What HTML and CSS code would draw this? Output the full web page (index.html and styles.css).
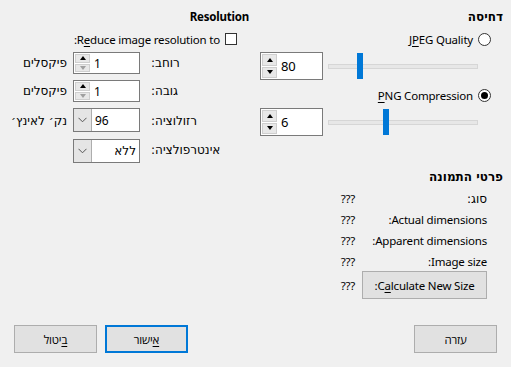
FILE: index.html
```html
<!DOCTYPE html>
<html lang="he" dir="rtl">
<head>
<meta charset="utf-8">
<link rel="stylesheet" href="styles.css">
</head>
<body>
<div class="dialog">
  <div class="top">
    <section class="col-compress">
      <h2 class="heading he">דחיסה</h2>
      <div class="opt">
        <span class="radio"></span>
        <span dir="ltr">J<u>P</u>EG Quality</span>
      </div>
      <div class="slide-row">
        <div class="slider"><div class="track"></div><div class="thumb" style="left:29px"></div></div>
        <div class="spin big">
          <div class="spin-btns"><span class="sbtn"><i class="up"></i></span><span class="sbtn"><i class="down"></i></span></div>
          <span class="val">80</span>
        </div>
      </div>
      <div class="opt opt2">
        <span class="radio on"></span>
        <span dir="ltr"><u>P</u>NG Compression</span>
      </div>
      <div class="slide-row">
        <div class="slider"><div class="track"></div><div class="thumb" style="left:55px"></div></div>
        <div class="spin big">
          <div class="spin-btns"><span class="sbtn"><i class="up"></i></span><span class="sbtn"><i class="down"></i></span></div>
          <span class="val">6</span>
        </div>
      </div>

      <h2 class="heading details-head he">פרטי התמונה</h2>
      <div class="details">
        <span class="dl he">סוג:</span><span class="dv">???</span>
        <span class="dl">Actual dimensions:</span><span class="dv">???</span>
        <span class="dl">Apparent dimensions:</span><span class="dv">???</span>
        <span class="dl">Image size:</span><span class="dv">???</span>
        <button class="btn calc">C<u>a</u>lculate New Size:</button><span class="dv">???</span>
      </div>
    </section>

    <section class="col-res">
      <h2 class="heading">Resolution</h2>
      <div class="opt">
        <span class="check"></span>
        <span>R<u>e</u>duce image resolution to:</span>
      </div>
      <div class="res-grid">
        <span class="lbl he">רוחב:</span>
        <div class="spin small">
          <div class="spin-btns"><span class="sbtn"><i class="up"></i></span><span class="sbtn"><i class="down dis"></i></span></div>
          <span class="val">1</span>
        </div>
        <span class="unit he">פיקסלים</span>

        <span class="lbl he">גובה:</span>
        <div class="spin small">
          <div class="spin-btns"><span class="sbtn"><i class="up"></i></span><span class="sbtn"><i class="down dis"></i></span></div>
          <span class="val">1</span>
        </div>
        <span class="unit he">פיקסלים</span>

        <span class="lbl he">רזולוציה:</span>
        <div class="combo">
          <span class="val num">96</span>
          <span class="drop"><svg width="9" height="6" viewBox="0 0 9 6"><path d="M0.5 0.8 L4.5 4.8 L8.5 0.8" fill="none" stroke="#555" stroke-width="1"/></svg></span>
        </div>
        <span class="unit he">נק׳ לאינץ׳</span>

        <span class="lbl he">אינטרפולציה:</span>
        <div class="combo">
          <span class="val he">ללא</span>
          <span class="drop"><svg width="9" height="6" viewBox="0 0 9 6"><path d="M0.5 0.8 L4.5 4.8 L8.5 0.8" fill="none" stroke="#555" stroke-width="1"/></svg></span>
        </div>
        <span class="unit"></span>
      </div>
    </section>
  </div>

  <div class="footer">
    <button class="btn fbtn he">עזרה</button>
    <div class="fgroup">
      <button class="btn fbtn default he"><u>א</u>ישור</button>
      <button class="btn fbtn he"><u>ב</u>יטול</button>
    </div>
  </div>
</div>
</body>
</html>
```

FILE: styles.css
```css
* { box-sizing: border-box; margin: 0; padding: 0; }
html, body { width: 511px; height: 367px; overflow: hidden; }
body {
  background: #f0f0f0;
  font-family: "Segoe UI", "Noto Sans", "Open Sans", "DejaVu Sans", sans-serif;
  font-size: 11.5px;
  letter-spacing: -0.2px;
  color: #000;
}
.he {
  font-family: "DejaVu Sans", sans-serif;
  font-size: 12px;
  letter-spacing: 0;
}
u { text-decoration: underline; text-underline-offset: 2px; }

.dialog {
  height: 367px;
  display: flex;
  flex-direction: column;
  padding: 9px 8px 14px;
}
.top { display: flex; gap: 6px; }
.col-compress { width: 248px; }
.col-res { width: 241px; }

.heading {
  font-size: 11.5px;
  font-weight: bold;
  line-height: 16px;
}
.heading.he { font-size: 12px; }

.opt {
  display: flex;
  align-items: center;
  gap: 5px;
  height: 16px;
  margin-top: 6px;
  padding-right: 12px;
}
.opt2 { margin-top: 7px; }

.radio {
  width: 13px; height: 13px;
  border: 1px solid #333;
  border-radius: 50%;
  background: #fff;
  display: flex; align-items: center; justify-content: center;
  flex: none;
}
.radio.on::after {
  content: "";
  width: 7px; height: 7px;
  border-radius: 50%;
  background: #000;
}
.check {
  width: 12px; height: 12px;
  border: 1px solid #333;
  background: #fff;
  flex: none;
}

.slide-row {
  display: flex;
  align-items: center;
  gap: 5px;
  height: 28px;
  margin-top: 5px;
  padding-right: 25px;
}
.slider {
  position: relative;
  width: 150px;
  height: 28px;
  display: flex;
  align-items: center;
}
.track {
  width: 100%;
  height: 5px;
  background: #e7e7e7;
  border: 1px solid #d6d6d6;
}
.thumb {
  position: absolute;
  top: 1px;
  width: 6px;
  height: 26px;
  background: #0078d7;
}

.spin {
  direction: ltr;
  display: flex;
  align-items: stretch;
  border: 1px solid #7a7a7a;
  background: #fff;
}
.spin.big { width: 63px; height: 28px; }
.spin.small { width: 67px; height: 22px; }
.spin-btns {
  display: flex;
  flex-direction: column;
  gap: 1px;
  padding: 1px 0 1px 1px;
  width: 16px;
}
.sbtn {
  flex: 1;
  background: #e8e8e8;
  border: 1px solid #cfcfcf;
  display: flex; align-items: center; justify-content: center;
}
.up, .down { width: 0; height: 0; border-left: 3.5px solid transparent; border-right: 3.5px solid transparent; }
.up { border-bottom: 4px solid #000; }
.down { border-top: 4px solid #000; }
.down.dis { border-top-color: #a0a0a0; }
.spin .val {
  display: flex;
  align-items: center;
  padding-left: 4px;
  font-size: 12px;
}
.spin.big .val { font-size: 13px; }

.res-grid {
  display: grid;
  grid-template-columns: 97px 67px 1fr;
  grid-template-rows: 22px 22px 25px 22px;
  row-gap: 6px;
  margin-top: 5px;
  padding-right: 12px;
  align-items: center;
}
.lbl { text-align: left; padding-left: 11px; }
.unit { padding-right: 6px; }

.combo {
  direction: ltr;
  display: flex;
  flex-direction: row-reverse;
  height: 24px;
  border: 1px solid #7a7a7a;
  background: #fff;
  align-self: start;
}
.combo .drop {
  width: 18px;
  background: #e5e5e5;
  border-right: 1px solid #adadad;
  display: flex; align-items: center; justify-content: center;
  order: 2;
}
.combo .val {
  flex: 1;
  display: flex;
  align-items: center;
  justify-content: flex-start;
  padding-right: 3px;
  direction: rtl;
  font-size: 12px;
}
.combo .val.num { direction: ltr; padding-left: 3px; padding-right: 0; }

.details-head { margin-top: 33px; }
.details {
  display: grid;
  grid-template-columns: 125px 1fr;
  grid-auto-rows: 21px;
  column-gap: 7px;
  margin-top: 3px;
  padding-right: 16px;
  align-items: center;
}
.dv { text-align: right; }
.details .calc { margin-top: 5px; height: 28px; width: 125px; }
.details .calc + .dv { margin-top: 5px; }

.btn {
  font: inherit;
  letter-spacing: inherit;
  color: #000;
  background: #e1e1e1;
  border: 1px solid #adadad;
  cursor: default;
}

.footer {
  margin-top: auto;
  display: flex;
  justify-content: space-between;
  padding: 0 6px;
}
.fgroup { display: flex; gap: 8px; }
.fbtn { width: 83px; height: 28px; }
.fbtn.default { border: 2px solid #0078d7; }
```
